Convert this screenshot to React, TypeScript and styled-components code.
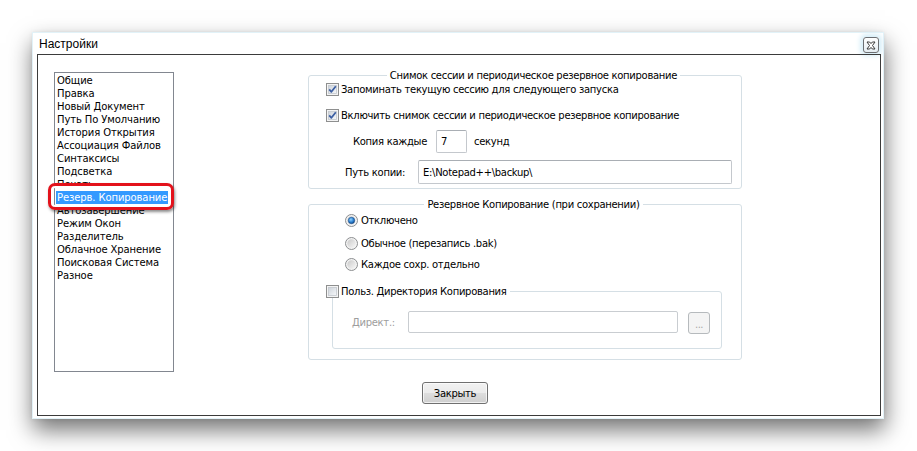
import React, { useId } from 'react';
import styled, { createGlobalStyle } from 'styled-components';

const GlobalStyle = createGlobalStyle`
  html, body {
    margin: 0;
    background: #fff;
  }
  body {
    font-family: "DejaVu Sans", Tahoma, sans-serif;
    font-size: 10px;
    letter-spacing: -0.3px;
    color: #000;
  }
  * {
    box-sizing: border-box;
  }
`;

const Page = styled.div`
  width: 917px;
  height: 451px;
  padding: 32px 0 0 32px;
  overflow: hidden;
`;

const Window = styled.div`
  width: 852px;
  height: 387px;
  display: flex;
  flex-direction: column;
  background: #fff;
  border: 1px solid #e2f2f8;
  padding: 0 2px 2px 4px;
  box-shadow: 1px 11px 22px rgba(0, 0, 0, 0.55), 0 0 4px rgba(0, 0, 0, 0.08);
`;

const TitleBar = styled.div`
  height: 21px;
  display: flex;
  align-items: center;
  justify-content: space-between;
  padding-left: 2px;
  font-family: "Liberation Sans", Arial, sans-serif;
  font-size: 12px;
  letter-spacing: 0;
`;

const CloseBox = styled.div`
  width: 16px;
  height: 16px;
  margin-top: 3px;
  margin-right: 2px;
  border: 1px solid #6c6f73;
  border-radius: 3px;
  background: linear-gradient(#ffffff, #e4edf2);
  box-shadow: 0 0 5px 3px #d6eef8;
  display: flex;
  align-items: center;
  justify-content: center;
`;

const Client = styled.div`
  flex: 1;
  border: 1px solid #3b3b3b;
  padding: 14px 0 0 16px;
  display: flex;
  flex-direction: column;
`;

const TopRow = styled.div`
  display: flex;
  align-items: flex-start;
`;

const ListBox = styled.div`
  position: relative;
  width: 120px;
  height: 300px;
  margin-top: 3px;
  border: 1px solid #828790;
  padding: 1px 0 0 2px;
  background: #fff;
  letter-spacing: -0.1px;
`;

const ListItem = styled.div<{ $selected?: boolean }>`
  height: 13px;
  line-height: 13px;
  white-space: nowrap;
  span {
    display: inline-block;
    padding: 0 1px;
    margin-left: -1px;
    background: ${(p) => (p.$selected ? '#3399ff' : 'transparent')};
    color: ${(p) => (p.$selected ? '#fff' : '#000')};
  }
`;

const Callout = styled.div`
  position: absolute;
  left: -7px;
  top: 110px;
  width: 126px;
  height: 27px;
  border: 3px solid #e3121b;
  border-radius: 7px;
  box-shadow: inset 0 0 0 2px #fff, 1px 2px 3px rgba(0, 0, 0, 0.45);
`;

const RightColumn = styled.div`
  width: 434px;
  margin-left: 134px;
  display: flex;
  flex-direction: column;
`;

const Group = styled.fieldset<{ $top?: number; $bottom: number }>`
  margin: ${(p) => p.$top ?? 0}px 0 0 0;
  padding: 0 0 ${(p) => p.$bottom}px 17px;
  border: 1px solid #d5dfe5;
  border-radius: 3px;
  min-width: 0;
`;

const GroupTitle = styled.legend`
  margin: 0 auto;
  padding: 0 3px;
  height: 13px;
  line-height: 13px;
`;

const SubGroup = styled.fieldset`
  width: 390px;
  margin: 13px 0 0 6px;
  padding: 0 0 15px 0;
  border: 1px solid #d5dfe5;
  border-radius: 3px;
  min-width: 0;
`;

const SubTitle = styled.legend`
  margin-left: -7px;
  padding: 0 3px 0 0;
  height: 14px;
  display: flex;
  align-items: center;
  gap: 2px;
`;

const OptionRow = styled.div<{ $top: number; $indent?: number }>`
  height: 14px;
  margin-top: ${(p) => p.$top}px;
  margin-left: ${(p) => p.$indent ?? 0}px;
  display: flex;
  align-items: center;
  gap: 2px;
  white-space: nowrap;
`;

const RadioRow = styled(OptionRow)`
  gap: 3px;
`;

const FieldRow = styled.div<{ $top: number; $indent: number; $h: number }>`
  height: ${(p) => p.$h}px;
  margin-top: ${(p) => p.$top}px;
  padding-left: ${(p) => p.$indent}px;
  display: flex;
  align-items: center;
`;

const FieldLabel = styled.div<{ $w: number; $disabled?: boolean }>`
  width: ${(p) => p.$w}px;
  white-space: nowrap;
  color: ${(p) => (p.$disabled ? '#9d9d9d' : '#000')};
`;

const TextBox = styled.input<{ $w: number; $h: number }>`
  width: ${(p) => p.$w}px;
  height: ${(p) => p.$h}px;
  margin: 0;
  padding: 0 0 0 4px;
  font: inherit;
  letter-spacing: inherit;
  color: #000;
  background: #fff;
  border: 1px solid #c4c8cd;
  border-top-color: #a9aeb4;
  border-radius: 2px;
  outline: none;
  &:disabled {
    border-color: #c9cdd1;
  }
`;

const Unit = styled.div`
  margin-left: 7px;
`;

const BrowseButton = styled.div`
  width: 22px;
  height: 22px;
  margin-left: 10px;
  margin-top: 2px;
  border: 1px solid #b6babd;
  border-radius: 3px;
  background: #f4f4f4;
  color: #a8a8a8;
  font-size: 10px;
  line-height: 24px;
  text-align: center;
  letter-spacing: -0.5px;
`;

const Footer = styled.div`
  margin-top: 10px;
  display: flex;
  justify-content: center;
  padding-right: 24px;
`;

const PushButton = styled.button`
  width: 66px;
  height: 22px;
  margin: 0;
  padding: 0;
  font: inherit;
  letter-spacing: inherit;
  color: #000;
  border: 1px solid #707070;
  border-radius: 3px;
  background: linear-gradient(#f2f2f2 0%, #ebebeb 48%, #dddddd 52%, #cfcfcf 100%);
  box-shadow: inset 0 0 0 1px rgba(255, 255, 255, 0.7);
`;

const CheckMark: React.FC<{ checked?: boolean }> = ({ checked }) => {
  const id = useId();
  return (
    <svg width="13" height="13" viewBox="0 0 13 13">
      <defs>
        <linearGradient id={id} x1="0" y1="0" x2="1" y2="1">
          <stop offset="0" stopColor="#cdd3da" />
          <stop offset="1" stopColor="#f6f8fa" />
        </linearGradient>
      </defs>
      <rect x="0.5" y="0.5" width="12" height="12" fill="#f4f4f4" stroke="#8e8f8f" />
      <rect x="2.5" y="2.5" width="8" height="8" fill={`url(#${id})`} stroke="#c3c8ce" strokeWidth="0.8" />
      {checked && (
        <path d="M3.2 6.4 L5.4 8.8 L9.8 3.2" fill="none" stroke="#3c5fa3" strokeWidth="1.8" strokeLinejoin="round" />
      )}
    </svg>
  );
};

const RadioMark: React.FC<{ checked?: boolean }> = ({ checked }) => {
  const id = useId();
  const dot = useId();
  return (
    <svg width="13" height="13" viewBox="0 0 13 13">
      <defs>
        <linearGradient id={id} x1="0" y1="0" x2="1" y2="1">
          <stop offset="0" stopColor="#c9c9c9" />
          <stop offset="1" stopColor="#f7f7f7" />
        </linearGradient>
        <radialGradient id={dot} cx="0.4" cy="0.35" r="0.7">
          <stop offset="0" stopColor="#8fd0ff" />
          <stop offset="0.6" stopColor="#2a7fcf" />
          <stop offset="1" stopColor="#0d3e7a" />
        </radialGradient>
      </defs>
      <circle cx="6.5" cy="6.5" r="6" fill="#f2f2f2" stroke="#8c8e90" />
      <circle cx="6.5" cy="6.5" r="4.2" fill={`url(#${id})`} />
      {checked && <circle cx="6.5" cy="6.5" r="3.2" fill={`url(#${dot})`} stroke="#1b4f8c" strokeWidth="0.6" />}
    </svg>
  );
};

const CloseGlyph = () => (
  <svg width="10" height="9" viewBox="0 0 10 9">
    <path
      d="M1 1 H3.6 L5 2.6 L6.4 1 H9 L6.5 4.5 L9 8 H6.4 L5 6.4 L3.6 8 H1 L3.5 4.5 Z"
      fill="#fff"
      stroke="#3a3a3a"
      strokeWidth="1"
      strokeLinejoin="round"
    />
  </svg>
);

const pages = [
  'Общие',
  'Правка',
  'Новый Документ',
  'Путь По Умолчанию',
  'История Открытия',
  'Ассоциация Файлов',
  'Синтаксисы',
  'Подсветка',
  'Печать',
  'Резерв. Копирование',
  'Автозавершение',
  'Режим Окон',
  'Разделитель',
  'Облачное Хранение',
  'Поисковая Система',
  'Разное',
];

const App: React.FC = () => {
  const selected = 'Резерв. Копирование';
  return (
    <Page>
      <GlobalStyle />
      <Window>
        <TitleBar>
          <span>Настройки</span>
          <CloseBox>
            <CloseGlyph />
          </CloseBox>
        </TitleBar>
        <Client>
          <TopRow>
            <ListBox>
              {pages.map((name) => (
                <ListItem key={name} $selected={name === selected}>
                  <span>{name}</span>
                </ListItem>
              ))}
              <Callout />
            </ListBox>
            <RightColumn>
              <Group $bottom={4}>
                <GroupTitle>Снимок сессии и периодическое резервное копирование</GroupTitle>
                <OptionRow $top={0}>
                  <CheckMark checked />
                  Запоминать текущую сессию для следующего запуска
                </OptionRow>
                <OptionRow $top={12}>
                  <CheckMark checked />
                  Включить снимок сессии и периодическое резервное копирование
                </OptionRow>
                <FieldRow $top={8} $indent={27} $h={23}>
                  <FieldLabel $w={83}>Копия каждые</FieldLabel>
                  <TextBox $w={31} $h={23} value="7" readOnly />
                  <Unit>секунд</Unit>
                </FieldRow>
                <FieldRow $top={7} $indent={19} $h={24}>
                  <FieldLabel $w={73}>Путь копии:</FieldLabel>
                  <TextBox $w={314} $h={24} value="E:\Notepad++\backup\" readOnly />
                </FieldRow>
              </Group>
              <Group $top={9} $bottom={10}>
                <GroupTitle>Резервное Копирование (при сохранении)</GroupTitle>
                <RadioRow $top={2} $indent={19}>
                  <RadioMark checked />
                  Отключено
                </RadioRow>
                <RadioRow $top={9} $indent={19}>
                  <RadioMark />
                  Обычное (перезапись .bak)
                </RadioRow>
                <RadioRow $top={7} $indent={19}>
                  <RadioMark />
                  Каждое сохр. отдельно
                </RadioRow>
                <SubGroup>
                  <SubTitle>
                    <CheckMark />
                    Польз. Директория Копирования
                  </SubTitle>
                  <FieldRow $top={13} $indent={19} $h={22}>
                    <FieldLabel $w={56} $disabled>
                      Директ.:
                    </FieldLabel>
                    <TextBox $w={270} $h={22} value="" disabled readOnly />
                    <BrowseButton>...</BrowseButton>
                  </FieldRow>
                </SubGroup>
              </Group>
            </RightColumn>
          </TopRow>
          <Footer>
            <PushButton>Закрыть</PushButton>
          </Footer>
        </Client>
      </Window>
    </Page>
  );
};

export default App;
